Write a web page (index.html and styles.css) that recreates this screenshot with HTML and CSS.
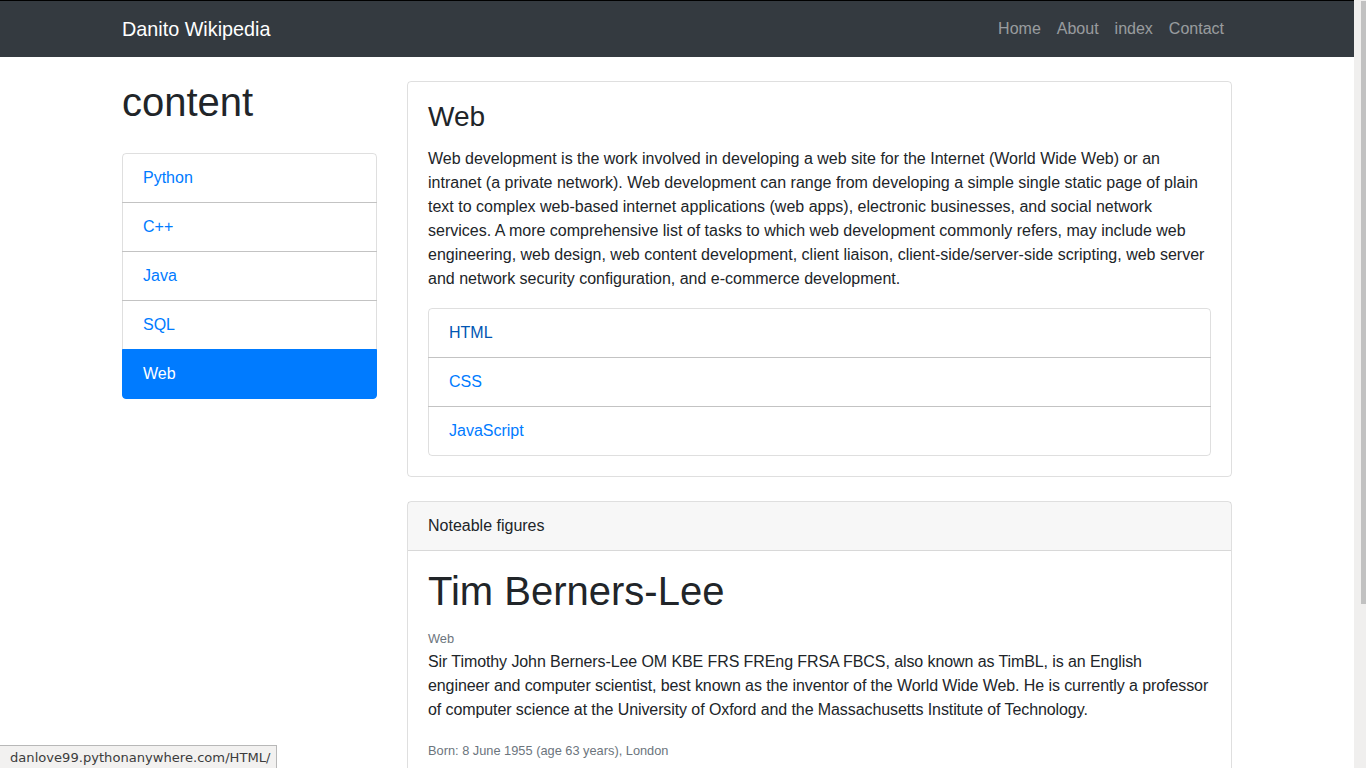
FILE: index.html
```html
<!DOCTYPE html>
<html lang="en">
<head>
<meta charset="utf-8">
<title>Danito Wikipedia</title>
<link rel="stylesheet" href="styles.css">
</head>
<body>
<nav class="navbar">
  <div class="container nav-inner">
    <a class="brand" href="#">Danito Wikipedia</a>
    <ul class="nav-links">
      <li><a href="#">Home</a></li>
      <li><a href="#">About</a></li>
      <li><a href="#">index</a></li>
      <li><a href="#">Contact</a></li>
    </ul>
  </div>
</nav>
<main class="container main">
  <aside class="sidebar">
    <h1 class="side-title">content</h1>
    <div class="list-group">
      <a class="list-item" href="#">Python</a>
      <a class="list-item" href="#">C++</a>
      <a class="list-item" href="#">Java</a>
      <a class="list-item" href="#">SQL</a>
      <a class="list-item active" href="#">Web</a>
    </div>
  </aside>
  <section class="content">
    <div class="card">
      <div class="card-body">
        <h3 class="card-title">Web</h3>
        <p class="card-text">Web development is the work involved in developing a web site for the Internet (World Wide Web) or an intranet (a private network). Web development can range from developing a simple single static page of plain text to complex web-based internet applications (web apps), electronic businesses, and social network services. A more comprehensive list of tasks to which web development commonly refers, may include web engineering, web design, web content development, client liaison, client-side/server-side scripting, web server and network security configuration, and e-commerce development.</p>
        <div class="list-group">
          <a class="list-item hover" href="#">HTML</a>
          <a class="list-item" href="#">CSS</a>
          <a class="list-item" href="#">JavaScript</a>
        </div>
      </div>
    </div>
    <div class="card card-figures">
      <div class="card-header">Noteable figures</div>
      <div class="card-body">
        <h1 class="figure-name">Tim Berners-Lee</h1>
        <small class="muted tag">Web</small>
        <p class="figure-text">Sir Timothy John Berners-Lee OM KBE FRS FREng FRSA FBCS, also known as TimBL, is an English<br>engineer and computer scientist, best known as the inventor of the World Wide Web. He is currently a professor of computer science at the University of Oxford and the Massachusetts Institute of Technology.</p>
        <small class="muted">Born: 8 June 1955 (age 63 years), London</small>
      </div>
    </div>
  </section>
</main>
<div class="statusbar">danlove99.pythonanywhere.com/HTML/</div>
<div class="scrollbar"><div class="thumb"></div></div>
</body>
</html>
```
FILE: styles.css
```css
html {
  overflow: hidden;
}
body {
  margin: 0 12px 0 0;
  font-family: "Liberation Sans", Arial, sans-serif;
  font-size: 16px;
  line-height: 1.5;
  color: #212529;
  background: #fff;
}
a {
  color: #007bff;
  text-decoration: none;
}
.container {
  width: 1140px;
  margin: 0 auto;
  padding: 0 15px;
  box-sizing: border-box;
}
.navbar {
  background: #343a40;
  border-top: 1px solid #000;
  height: 56px;
  box-sizing: content-box;
}
.nav-inner {
  display: flex;
  align-items: center;
  justify-content: space-between;
  height: 56px;
}
.brand {
  color: #fff;
  font-size: 19.8px;
  line-height: 30px;
}
.nav-links {
  display: flex;
  list-style: none;
  margin: 0;
  padding: 0;
}
.nav-links a {
  display: block;
  padding: 8px 8px;
  color: rgba(255, 255, 255, 0.5);
}
.main {
  display: flex;
  gap: 30px;
  margin-top: 24px;
  align-items: flex-start;
}
.sidebar {
  width: 255px;
  flex: none;
}
.content {
  flex: 1;
  min-width: 0;
}
.side-title {
  font-size: 40px;
  font-weight: 500;
  line-height: 48px;
  margin: -3px 0 27px 0;
}
.list-group {
  display: flex;
  flex-direction: column;
}
.list-item {
  position: relative;
  display: block;
  padding: 12px 20px;
  line-height: 24px;
  border: 1px solid rgba(0, 0, 0, 0.125);
  margin-bottom: -1px;
}
.list-item:first-child {
  border-top-left-radius: 4px;
  border-top-right-radius: 4px;
}
.list-item:last-child {
  margin-bottom: 0;
  border-bottom-left-radius: 4px;
  border-bottom-right-radius: 4px;
}
.list-item.active {
  z-index: 2;
  background: #007bff;
  border-color: #007bff;
  color: #fff;
}
.list-item.hover {
  color: #0056b3;
}
.card {
  border: 1px solid rgba(0, 0, 0, 0.125);
  border-radius: 4px;
}
.card-body {
  padding: 20px;
}
.card-title {
  font-size: 28px;
  font-weight: 500;
  line-height: 33.6px;
  margin: -2px 0 13px 0;
}
.card-text {
  margin: 0 0 17px 0;
}
.card-figures {
  margin-top: 24px;
}
.card-header {
  background: rgba(0, 0, 0, 0.03);
  border-bottom: 1px solid rgba(0, 0, 0, 0.125);
  padding: 12px 20px;
  line-height: 24px;
}
.figure-name {
  font-size: 40px;
  font-weight: 500;
  line-height: 48px;
  margin: -4px 0 14px 0;
}
.muted {
  display: block;
  font-size: 12.8px;
  line-height: 19px;
  color: #6c757d;
}
.tag {
  margin-bottom: 2px;
}
.figure-text {
  margin: 0 0 19px 0;
  letter-spacing: -0.09px;
}
.statusbar {
  position: fixed;
  left: 0;
  bottom: 0;
  height: 22px;
  padding: 0 6px 0 10px;
  background: #f2f1f0;
  border: 1px solid #b8b8b8;
  border-left: 0;
  border-bottom: 0;
  font-family: "DejaVu Sans", sans-serif;
  font-size: 13.1px;
  line-height: 23px;
  color: #3c3c3c;
}
.scrollbar {
  position: fixed;
  top: 0;
  right: 0;
  width: 12px;
  height: 768px;
  background: #f0efee;
}
.thumb {
  position: absolute;
  top: 1px;
  right: 0;
  width: 5px;
  height: 603px;
  background: #c1c1c1;
}
```
